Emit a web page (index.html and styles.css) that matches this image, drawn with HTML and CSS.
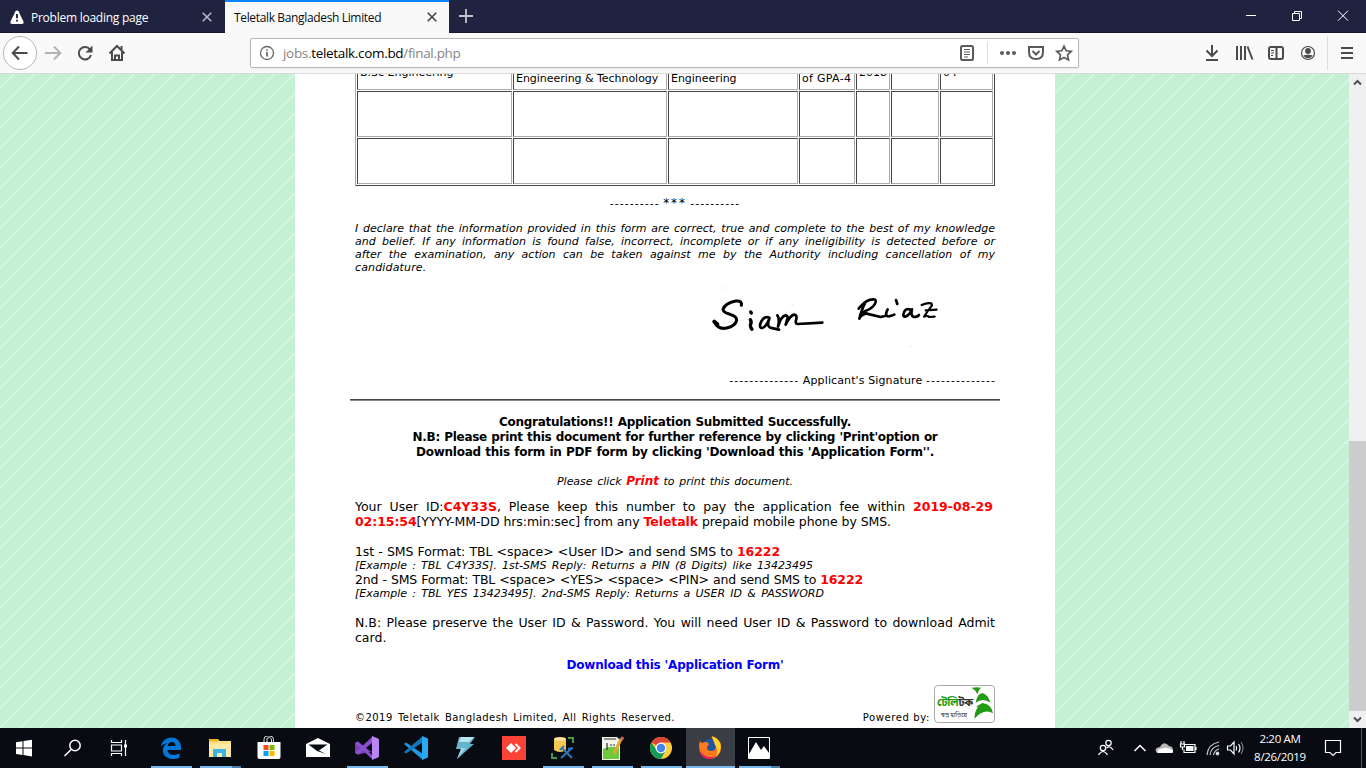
FILE: index.html
```html
<!DOCTYPE html>
<html lang="en">
<head>
<meta charset="utf-8">
<title>Teletalk Bangladesh Limited</title>
<link rel="stylesheet" href="styles.css">
</head>
<body>
<header class="tabs">
  <div class="tab">
    <svg class="warn" width="14" height="14" viewBox="0 0 14 14"><path d="M7 0.4Q8 .4 8.5 1.3L13.6 11.8Q14 13.8 12.4 14H1.6Q0 13.8.4 11.8L5.5 1.3Q6 .4 7 .4Z" fill="#fff"/><path d="M7 4v4.3M7 9.8v1.8" stroke="#202340" stroke-width="1.9"/></svg>
    <span class="t1">Problem loading page</span>
    <svg class="x" width="10" height="10" viewBox="0 0 10 10"><path d="M.7.7 9.3 9.3M9.3.7.7 9.3" stroke="#b9bac5" stroke-width="1.5"/></svg>
  </div>
  <div class="tab active">
    <span class="t2">Teletalk Bangladesh Limited</span>
    <svg class="x" width="10" height="10" viewBox="0 0 10 10"><path d="M.7.7 9.3 9.3M9.3.7.7 9.3" stroke="#444" stroke-width="1.6"/></svg>
  </div>
  <svg class="plus" width="14" height="14" viewBox="0 0 14 14"><path d="M7 0v14M0 7h14" stroke="#c3c4cd" stroke-width="1.8"/></svg>
  <svg class="win" width="106" height="12" viewBox="0 0 106 12" fill="none" stroke="#fff"><path d="M0 5.5h10M46.5 3.5h7v7h-7zM48.5 3.5v-2h7v7h-2M92 .7l10 10M102 .7l-10 10"/></svg>
</header>
<nav class="bar">
  <svg width="130" height="40" viewBox="0 0 130 40" fill="none" stroke="#4b4b4f" stroke-width="2">
    <circle cx="20" cy="20" r="16.5" fill="#fff" stroke="#b5b5b7" stroke-width="1"/>
    <path d="M27.5 20H13M19 13.5 12.7 20l6.300 6.500"/>
    <path d="M45 20h15M54 13.500 60.300 20 54 26.500" stroke="#b3b3b5"/>
    <path d="M90 16.500A6.200 6.200 0 1 0 91 22"/><path d="M92.500 12.500v7h-7z" fill="#4b4b4f" stroke="none"/>
    <path d="M109.500 20.500 117 13l7.500 7.500M112 19v8h10v-8M121.500 13v4"/><path d="M115 27v-4.500h4V27"/>
  </svg>
  <div class="url">
    <svg width="16" height="16" viewBox="0 0 16 16" fill="none" stroke="#666"><circle cx="8" cy="8" r="6.500" stroke-width="1.300"/><path d="M8 7v4.500M8 4.200v1.500" stroke-width="1.700"/></svg>
    <span class="addr">jobs.<b>teletalk.com.bd</b>/final.php</span>
    <svg class="acts" width="118" height="24" viewBox="0 0 118 24" fill="none" stroke="#5a5a5d" stroke-width="2">
      <rect x="2" y="5" width="12" height="14" rx="1.500"/><path d="M5 8.500h6M5 11h6M5 13.500h6M5 16h4" stroke-width="1"/>
      <path d="M28.500 1v22" stroke="#ddd" stroke-width="1"/>
      <g fill="#5a5a5d" stroke="none"><circle cx="43" cy="12" r="2"/><circle cx="49" cy="12" r="2"/><circle cx="55" cy="12" r="2"/></g>
      <path d="M70 6h14v5q0 7-7 7t-7-7zM73.500 10l3.500 3.500 3.500-3.500"/>
      <path d="M105 5.200l2.200 4.600 5 .6-3.700 3.500 1 5-4.500-2.500-4.500 2.500 1-5-3.700-3.500 5-.6z" stroke-width="1.700"/>
    </svg>
  </div>
  <svg class="tools" width="166" height="40" viewBox="0 0 166 40" fill="none" stroke="#4b4b4f" stroke-width="2">
    <path d="M12 12v10.500M6.500 17.500l5.500 5.500 5.500-5.500M6 27h12"/>
    <path d="M37 13v14M41 13v14M45 13v14M47.500 13.500l5 13"/>
    <rect x="69" y="14" width="14" height="12" rx="2"/><path d="M76.500 14v12"/><path d="M71 17.500h3M71 20h3M71 22.500h2" stroke-width="1"/>
    <circle cx="108" cy="20" r="6.500" stroke-width="1.200"/><circle cx="108" cy="18" r="2.900" fill="#4b4b4f" stroke="none"/><path d="M103.500 22.300q4.500-1 9 0-1.200 3-4.500 3t-4.500-3" fill="#4b4b4f" stroke="none"/>
    <path d="M127.500 3v34" stroke="#ddd" stroke-width="1"/>
    <path d="M141 15h12M141 20h12M141 25h12"/>
  </svg>
</nav>
<main class="view">
  <div class="page">
    <div class="table">
      <div class="cell">B.Sc Engineering</div><div class="cell low">Engineering &amp; Technology</div><div class="cell low">Engineering</div><div class="cell low gpa">of GPA-4</div><div class="cell">2018</div><div class="cell"></div><div class="cell">04</div>
      <div class="cell"></div><div class="cell"></div><div class="cell"></div><div class="cell"></div><div class="cell"></div><div class="cell"></div><div class="cell"></div>
      <div class="cell"></div><div class="cell"></div><div class="cell"></div><div class="cell"></div><div class="cell"></div><div class="cell"></div><div class="cell"></div>
    </div>
    <div class="stars"><span class="dash">----------</span> <span class="ast">***</span> <span class="dash">----------</span></div>
    <div class="declare">
      <div>I declare that the information provided in this form are correct, true and complete to the best of my knowledge</div>
      <div>and belief. If any information is found false, incorrect, incomplete or if any ineligibility is detected before or</div>
      <div>after the examination, any action can be taken against me by the Authority including cancellation of my</div>
      <div class="last">candidature.</div>
    </div>
    <svg class="sign" width="295" height="90" viewBox="0 0 885 270" fill="none" stroke="#000" stroke-linecap="round" stroke-linejoin="round" stroke-width="9">
      <path d="M124 76Q127 61 107 63 74 70 69 88 69 98 90 103 111 109 110 121 106 138 80 144 54 150 43 125"/><path d="M43 125l9 8" stroke-width="12"/>
      <path d="M151 119q5 8 0 15 0 8 5 14M152 96l2 3" stroke-width="10"/>
      <path d="M208 113q-14-7-24 11-8 17 0 20 12 1 24-28-8 22 2 27l27 6" stroke-width="8"/>
      <path d="M232 106q8 12 2 34 9-31 22-34 10 0 5 14l-4 14q13-27 25-30 10 1 7 13-5 14 4 15l74-4" stroke-width="8"/>
      <path d="M495 69q-8 15-17 47 3-10 22-16M476 86q16-20 32-26 21-6 19 6-4 17-31 27-12 7 4 8l42 10 13-3" stroke-width="8"/>
      <path d="M563 88q-8 15-2 20 8 3 22-4M588 60l4 12" stroke-width="8"/>
      <path d="M632 89q-14-6-20 8-5 15 4 13 12-3 20-22-5 19 5 23 12 0 16-6" stroke-width="8"/>
      <path d="M665 75q15-7 29-5l2 6q-8 10-24 34 7-5 16 1l16-1M677 91l33-2" stroke-width="6.500"/>
      <path d="M630 199h1M276 74h1M68 24h1" stroke="#ddd" stroke-width="4"/>
    </svg>
    <div class="siglabel"><span class="dash">--------------</span> Applicant's Signature <span class="dash">--------------</span></div>
    <div class="rule"></div>
    <div class="congrats">
      <div class="g1">Congratulations!! Application Submitted Successfully.</div>
      <div class="g2">N.B: Please print this document for further reference by clicking 'Print'option or</div>
      <div class="g3">Download this form in PDF form by clicking 'Download this 'Application Form''.</div>
    </div>
    <div class="print">Please click <b>Print</b> to print this document.</div>
    <div class="info">
      <div class="l1">Your User ID:<b>C4Y33S</b>, Please keep this number to pay the application fee within <b>2019-08-29</b></div>
      <div class="l2"><b>02:15:54</b>[YYYY-MM-DD hrs:min:sec] from any <b>Teletalk</b> prepaid mobile phone by SMS.</div>
      <div class="l3">1st - SMS Format: TBL &lt;space&gt; &lt;User ID&gt; and send SMS to <b>16222</b></div>
      <div class="l4">[Example : TBL C4Y33S]. 1st-SMS Reply: Returns a PIN (8 Digits) like 13423495</div>
      <div class="l5">2nd - SMS Format: TBL &lt;space&gt; &lt;YES&gt; &lt;space&gt; &lt;PIN&gt; and send SMS to <b>16222</b></div>
      <div class="l6">[Example : TBL YES 13423495]. 2nd-SMS Reply: Returns a USER ID &amp; PASSWORD</div>
      <div class="l7">N.B: Please preserve the User ID &amp; Password. You will need User ID &amp; Password to download Admit</div>
      <div class="l8">card.</div>
    </div>
    <div class="download">Download this 'Application Form'</div>
    <div class="foot">
      <span class="copy">©2019 Teletalk Bangladesh Limited, All Rights Reserved.</span>
      <span class="power">Powered by:</span>
      <div class="logo">
        <div class="words"><div class="bn"><i>টেলি</i>টক</div><div class="bn2">স্বপ্ন হাতিয়ে</div></div>
        <svg width="22" height="34" viewBox="0 0 66 102" fill="#249b14"><path d="M2 5q16-3 28 0-8 6-11 20Q14 12 2 5zM14 50Q20 20 36 22 52 28 58 50 36 34 14 50zM10 98Q12 60 36 52 62 55 66 82 40 66 10 98zM14 62l22-12v12z"/></svg>
      </div>
    </div>
  </div>
  <div class="scroll">
    <svg width="17" height="17" viewBox="0 0 17 17"><path d="M5 10.500 8.500 7l3.500 3.500" fill="none" stroke="#505050" stroke-width="2"/></svg>
    <div class="thumb"></div>
    <svg width="17" height="17" viewBox="0 0 17 17"><path d="M5 6.500 8.500 10 12 6.500" fill="none" stroke="#505050" stroke-width="2"/></svg>
  </div>
</main>
<footer class="task">
  <div class="app"><svg viewBox="0 0 24 24"><path d="M4 6.200l6.500-1v6.400H4zM11.500 5l8.500-1.200v7.800h-8.500zM4 12.500h6.500V19L4 18zM11.500 12.500H20v7.900l-8.500-1.300z" fill="#fff"/></svg></div>
  <div class="app"><svg viewBox="0 0 24 24" fill="none" stroke="#fff" stroke-width="1.500"><circle cx="14" cy="9.500" r="5.200"/><path d="M10.200 13.500 3.500 20"/></svg></div>
  <div class="app"><svg viewBox="0 0 24 24" fill="none" stroke="#fff" stroke-width="1.200"><path d="M1.500 4v2.500h10V4M1.500 20v-2.500h10V20M1.500 9h10v6h-10zM15.500 4v16"/><path d="M14 8.500h3v3h-3z" fill="#fff" stroke="none"/></svg></div>
  <div class="app on"><svg viewBox="0 0 24 24"><path d="M2 10.500C3 5 7 1.500 12.300 1.500c6 0 9.700 4.500 9.700 10v2.500H8.500c.3 5.500 7 6 12 3.200v4.300C14 25 4 22.500 3.800 14.500c-.1-3.800 2-6.300 5-7.500C4.500 7.500 2 10.500 2 10.500zM8.700 10h7.800c0-5.500-7.300-5-7.800 0z" fill="#0078d7"/></svg></div>
  <div class="app on split"><svg viewBox="0 0 24 24"><path d="M1 3h9l1.500 2H23v16H1z" fill="#ffe08a"/><path d="M1 3h9v2.500H1z" fill="#f0b51f"/><path d="M1 8h22v13H1z" fill="#ffe9a6"/><path d="M5 21v-8h13v8h-4v-4H9v4z" fill="#38b4e8"/></svg></div>
  <div class="app"><svg viewBox="0 0 24 24"><path d="M7 6V3.500Q7 0 10 0h3q3.500 0 3.500 3.500V6M10 6V2.500Q13 0 14.500 3v3" fill="none" stroke="#ddd"/><path d="M.5 6h23v15q0 2-2 2h-19q-2 0-2-2z" fill="#fff"/><path d="M6.500 9h5v5h-5z" fill="#f25022"/><path d="M12.500 9h5v5h-5z" fill="#7fba00"/><path d="M6.500 15h5v5h-5z" fill="#00a4ef"/><path d="M12.500 15h5v5h-5z" fill="#ffb900"/></svg></div>
  <div class="app"><svg viewBox="0 0 24 24"><path d="M0 8 12 2l12 6v13H0z" fill="#fff"/><path d="M2.500 8.500h19L13 14.500l7 3.500-9-3z" fill="#080b12"/></svg></div>
  <div class="app on"><svg viewBox="0 0 24 24"><path d="M0 7l3-1.500L19 18v-3L3 18.500 0 17z" fill="#7941b5"/><path d="M0 7l3-1.500L18 20l-1 3z" fill="#8c50cf"/><path d="M0 7v10l2-2V9z" fill="#7941b5"/><path d="M0 17l3 1.500L18 6V0z" fill="#8c50cf"/><path d="M17 0l7 3v18l-7 3z" fill="#b984f4"/></svg></div>
  <div class="app"><svg viewBox="0 0 24 24"><path d="M0 8l2-1.500L19 18v6z" fill="#1f9ae5"/><path d="M0 16l2 1.500L19 6V0z" fill="#1477b8"/><path d="M18 0l6 2.500v19L18 24z" fill="#29aaf4"/></svg></div>
  <div class="app"><svg viewBox="0 0 24 24"><path d="M6 1h16l-5 7h4L4 23l4-10H3z" fill="#62b3cc"/><path d="M8 1h13l-5 5H6z" fill="#b9e4ee"/><path d="M5 12h8L4 23l4-10z" fill="#9fd5e4"/></svg></div>
  <div class="app"><svg viewBox="0 0 24 24"><path d="M0 0h24v24H0z" fill="#fb4238"/><path d="M9 7l5 5-5 5-5-5z" fill="#fff"/><path d="M13.500 8l4 4-4 4" fill="none" stroke="#fff" stroke-width="2"/></svg></div>
  <div class="app on"><svg viewBox="0 0 24 24"><path d="M3 3v11q6 4 12 0V3z" fill="#f5c74e"/><ellipse cx="9" cy="3" rx="6" ry="2" fill="#ffe394"/><path d="M17 2h5v5M1 17v5h5" fill="none" stroke="#419b4a" stroke-width="2"/><path d="M11 12l10 10M20 13 10 22M9 14l4-4M17 13l5-1" stroke="#2f76bd" stroke-width="2"/></svg></div>
  <div class="app on"><svg viewBox="0 0 24 24"><path d="M2 1h15l3 3v20H2z" fill="#f4f5e9"/><path d="M3 13q8-4 16-1v11H3z" fill="#6eca3a"/><path d="M7 7v7M10 9h2M13 9h2M4 3h12" stroke="#333" stroke-width="1.200"/><path d="M21 3 14 18" stroke="#e0a630" stroke-width="3"/><path d="M23 1l-2 3" stroke="#d26a5b" stroke-width="3"/></svg></div>
  <div class="app on"><svg viewBox="0 0 24 24"><circle cx="12" cy="12" r="11" fill="#ffcd40"/><path d="M12 12 2.500 6.500A11 11 0 0 1 21.500 6.500H12z" fill="#db4437"/><path d="M2.500 6.500A11 11 0 0 0 12 23l4.500-8.500L8 15z" fill="#0f9d58"/><circle cx="12" cy="12" r="5.400" fill="#fff"/><circle cx="12" cy="12" r="4.200" fill="#4285f4"/></svg></div>
  <div class="app on cur"><svg viewBox="0 0 24 24"><circle cx="12" cy="11" r="8" fill="#2354a3"/><path d="M2 5l2 2 3-1q3 0 4 2l-2 3q0 4 4 4 5 0 5-5Q17 5 13 1q7 0 9.500 6 2 8-3 13-7 6-14 0Q-1 14 2 5z" fill="#ff7a1c"/><path d="M14 0q6 2 8.500 8 1 8-4 12 2-6-1-10-2-5-3.500-10z" fill="#ffd22b"/><path d="M2 6q-3 9 4 13 6 4 12 1-6 6-13 1Q-1 15 2 6z" fill="#e51f62"/></svg></div>
  <div class="app on split"><svg viewBox="0 0 24 24"><path d="M1.500 1.500h21v21h-21z" fill="#080b12" stroke="#fff"/><path d="M2 18 9 6l5 8 3-4 5 7v5H2z" fill="#fff"/></svg></div>
  <svg class="tray" width="160" height="40" viewBox="0 0 160 40" fill="none" stroke="#fff" stroke-width="1.200">
    <circle cx="13.500" cy="15" r="2.700"/><path d="M11.500 20q3.500-3 6.500 2"/><circle cx="8" cy="20" r="2.700"/><path d="M3.500 27q4.500-7 9 0"/>
    <path d="M39.500 23l5.500-5.500 5.500 5.500" stroke-width="1.500"/>
    <path d="M62 25q-4-5 3-6 4-7 9-1 5 0 4 7z" fill="#b8b8b8" stroke="none"/><path d="M63 25q-2-4 4-4.500 6-2 11 2 0 2-2 2.500z" fill="#fff" stroke="none"/>
    <path d="M88.500 16.500H100v8H89v-3M101 19v3"/><path d="M91 18h7.500v5H91z" fill="#fff" stroke="none"/><path d="M86 13v3M89 13v3M85.500 16h4v3h-4zM87.500 19v3"/>
    <g stroke="#ccc"><path d="M112 27q1-11 12-13M115 27q1-8 9-9.500M118.500 27q1-5 5.500-6"/><circle cx="122.500" cy="25.500" r="1.300" fill="#fff"/></g>
    <path d="M132.500 18h3l3.500-4v12l-3.500-4h-3zM141 18q1.500 2 0 4.500M143.500 16q3 4 0 8.500"/><path d="M146 14q4 6 0 12" stroke="#777"/>
  </svg>
  <div class="clock"><div class="tm">2:20 AM</div><div class="dt">8/26/2019</div></div>
  <svg class="note" width="18" height="18" viewBox="0 0 18 18"><path d="M1.500 1.500h15v12H12L9 16.500l-3-3H1.500z" fill="none" stroke="#fff" stroke-width="1.200"/></svg>
  <div class="peek"></div>
</footer>
</body>
</html>
```
FILE: styles.css
```css
* { box-sizing: border-box; }
body { margin: 0; width: 1366px; height: 768px; overflow: hidden; display: flex; flex-direction: column; background: #fff; color: #000; font-family: Verdana, "DejaVu Sans", sans-serif; }
svg { display: block; flex: none; }
.tabs { height: 33px; flex: none; background: #202340; border-bottom: 1px solid #14162b; display: flex; align-items: center; font: 12px "Open Sans", sans-serif; white-space: nowrap; }
.tab { width: 225px; height: 33px; flex: none; display: flex; align-items: center; padding: 2px 13px 0 10px; color: #fff; }
.tab .x { margin-left: auto; }
.tab.active { width: 224px; padding: 0 12px 0 9px; background: #f9f9fa; border-top: 2px solid #0a84ff; color: #0c0c0d; }
.t1 { margin-left: 7px; letter-spacing: -.25px; }
.t2 { letter-spacing: -.35px; }
.plus { margin-left: 10px; }
.win { margin-left: auto; margin-right: 14px; }
.bar { height: 41px; flex: none; background: #f9f9fa; border-bottom: 1px solid #d8d8d9; display: flex; align-items: flex-start; }
.url { width: 829px; height: 30px; margin: 5px 0 0 120px; padding: 0 1px 0 8px; display: flex; align-items: center; background: #fff; border: 1px solid #b9b9ba; border-radius: 2px; box-shadow: 0 1px 3px #0001; flex: none; }
.addr { margin-left: 8px; font: 13.500px "Open Sans", sans-serif; letter-spacing: -.32px; color: #858588; }
.addr b { color: #000; font-weight: 400; }
.acts { margin-left: auto; }
.tools { margin-left: auto; margin-right: 0; }
.view { height: 654px; flex: none; display: flex; justify-content: space-between; overflow: hidden; background: repeating-linear-gradient(135deg, #c4f0d3 0 8.800px, #d9f7e3 9.800px 10.400px, #c4f0d3 11.400px 14.142px); }
.page { width: 760px; margin-left: 295px; padding: 0 60px; background: #fff; height: 654px; overflow: hidden; }
.table { width: 640px; margin-top: -21px; padding: 1px; border: 1px solid #aaa; border-right-color: #444; border-bottom-color: #444; display: grid; grid-template-columns: 155px 154px 130px 56px 34px 48px 53px; grid-template-rows: 35px 46px 46px; gap: 1px; }
.cell { border: 1px solid #444; border-right-color: #aaa; border-bottom-color: #aaa; padding: 0 2px; display: flex; align-items: center; font-size: 11px; line-height: 13px; white-space: nowrap; }
.low { align-items: flex-end; padding-bottom: 4px; letter-spacing: -.04px; }
.low.gpa { letter-spacing: .3px; }
.stars { margin-top: 11px; text-align: center; font-size: 11px; line-height: 13px; white-space: nowrap; }
.dash { letter-spacing: 1.030px; }
.ast { letter-spacing: 1.900px; font-size: 12px; }
.declare { margin-top: 12px; font-size: 11px; line-height: 13px; font-style: italic; white-space: nowrap; }
.declare div { text-align-last: justify; letter-spacing: .02px; }
.declare .last { text-align-last: left; letter-spacing: .15px; }
.sign { margin: 6px 0 0 345px; }
.siglabel { margin-top: 4px; font-size: 11px; line-height: 14px; text-align: right; white-space: nowrap; letter-spacing: .120px; }
.siglabel .dash:last-child { margin-right: -1px; }
.rule { width: 650px; height: 2px; margin: 11px 0 0 -5px; border-top: 1px solid #444; border-bottom: 1px solid #8a8a8a; }
.congrats { margin-top: 14px; font: bold 12px/15px Verdana, "DejaVu Sans", sans-serif; white-space: nowrap; }
.congrats div { margin: 0 auto; text-align-last: justify; letter-spacing: -.29px; }
.congrats .g1 { width: 352px; }
.congrats .g2 { width: 525px; }
.congrats .g3 { width: 518px; letter-spacing: -.24px; }
.print { width: 236px; height: 15px; margin: 14px auto 0; font-size: 11px; line-height: 15px; font-style: italic; text-align-last: justify; white-space: nowrap; letter-spacing: -.03px; }
.print b { font-size: 12px; line-height: 1; color: #f00; }
.info { margin-top: 10px; font-size: 12.500px; line-height: 15px; white-space: nowrap; }
.info div { height: 15px; text-align-last: justify; }
.info b { color: #f00; line-height: 1; }
.info .l1 { width: 638px; }
.info .l2 { width: 536px; letter-spacing: -.08px; }
.info .l3 { width: 425px; margin-top: 15px; letter-spacing: -.08px; }
.info .l4 { width: 458px; height: 14px; line-height: 14px; font-size: 11px; font-style: italic; }
.info .l5 { width: 508px; height: 14px; line-height: 14px; letter-spacing: -.16px; }
.info .l6 { width: 469px; height: 14px; line-height: 14px; font-size: 11px; font-style: italic; }
.info .l7 { width: 640px; margin-top: 14px; }
.info .l8 { width: 31px; }
.download { width: 217px; margin: 13px auto 0; font: bold 12px/15px Verdana, "DejaVu Sans", sans-serif; color: #00f; white-space: nowrap; text-align-last: justify; letter-spacing: -.2px; }
.foot { height: 40px; margin-top: 12px; display: flex; align-items: flex-start; font-size: 10px; white-space: nowrap; }
.copy { width: 320px; margin-top: 26px; line-height: 13px; text-align-last: justify; letter-spacing: .450px; }
.power { margin: 26px 4px 0 auto; line-height: 13px; letter-spacing: .6px; }
.logo { width: 61px; height: 38px; border: 1px solid #aaa; border-radius: 4px; display: flex; padding-left: 2px; }
.words { width: 34px; text-align: center; padding-top: 10px; }
.bn { font: bold 11px/15px "Noto Sans Bengali", "Lohit Bengali", FreeSans, sans-serif; letter-spacing: -.3px; color: #333; }
.bn i { font-style: normal; color: #249b14; }
.bn2 { font: 6px/8px "Noto Sans Bengali", "Lohit Bengali", FreeSans, sans-serif; color: #333; }
.scroll { width: 17px; background: #f0f0f0; display: flex; flex-direction: column; }
.thumb { height: 270px; margin-top: auto; background: #cdcdcd; }
.task { height: 40px; flex: none; background: #080b12; display: flex; align-items: center; font-family: "Open Sans", sans-serif; color: #fff; }
.app { width: 49px; height: 40px; flex: none; display: flex; align-items: center; justify-content: center; border: solid transparent; border-width: 0 4px; background-clip: padding-box; }
.app svg { width: 24px; height: 24px; margin-left: -1px; }
.app.on { background-image: linear-gradient(#76b9ed, #76b9ed); background-size: 100% 2px; background-repeat: no-repeat; background-position: bottom; }
.app.split { background-image: linear-gradient(90deg, #76b9ed 78%, #4c7fa8 78%); }
.app.cur { border-width: 0; background-color: #3b3d45; }
.tray { margin-left: auto; }
.clock { width: 56px; margin-left: -3px; text-align: center; font-size: 11.500px; line-height: 18px; white-space: nowrap; letter-spacing: -.3px; }
.clock { margin-bottom: 1px; }
.note { margin-left: 16px; }
.peek { width: 1px; height: 40px; margin-left: 19px; margin-right: 4px; background: #555; }
```
